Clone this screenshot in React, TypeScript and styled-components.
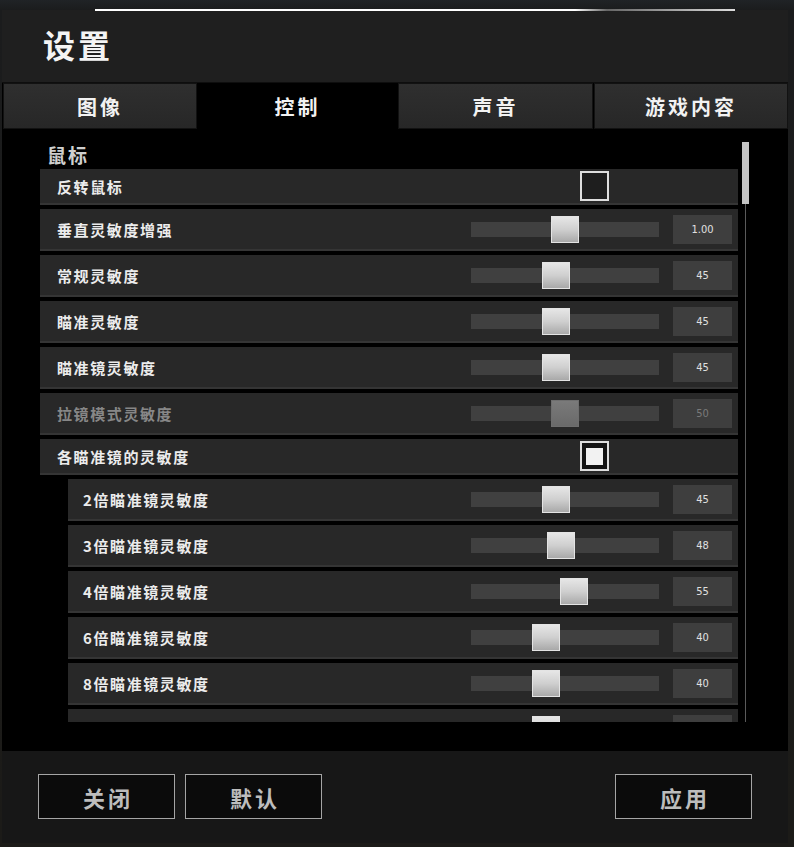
import styled, { createGlobalStyle } from "styled-components"

const GlobalStyle = createGlobalStyle`
  html, body {
    margin: 0;
    padding: 0;
    background: #1b1a18;
    font-family: "Noto Sans CJK SC", "Noto Sans", sans-serif;
  }
`

const Page = styled.div`
  width: 794px;
  height: 847px;
  padding: 10px 6px 0 2px;
  box-sizing: border-box;
  background: linear-gradient(180deg, #202326 0, #1b1c1d 10px, #1c1b18 100%);
`

const Panel = styled.div`
  position: relative;
  display: flex;
  flex-direction: column;
  height: 833px;
  background: #1f1f1f;

  &::before {
    content: "";
    position: absolute;
    top: -1px;
    left: 93px;
    width: 640px;
    height: 2px;
    background: linear-gradient(90deg, #fff 0, #fff 75%, #666 80%, #ddd 100%);
  }
`

const Header = styled.div`
  height: 72px;
  display: flex;
  align-items: center;
  padding-left: 41px;
  padding-bottom: 4px;
  box-sizing: border-box;
`

const Title = styled.h1`
  margin: 0;
  font-size: 32px;
  font-weight: 700;
  color: #f4f4f4;
  letter-spacing: 3px;
`

const TabBar = styled.div`
  display: grid;
  grid-template-columns: 194px 199px 195px 194px;
  column-gap: 1px;
  padding: 0 1px;
  height: 46px;
  background: #000;
  border-top: 1px solid #0e0e0e;
`

const Tab = styled.div<{ $active?: boolean }>`
  display: flex;
  align-items: center;
  justify-content: center;
  font-size: 20px;
  font-weight: 700;
  letter-spacing: 3px;
  color: #f2f2f2;
  background: ${(p) => (p.$active ? "#000" : "linear-gradient(180deg, #2f2f2f 0%, #272727 100%)")};
  border: ${(p) => (p.$active ? "none" : "1px solid #121212")};
`

const Content = styled.div`
  flex: 1;
  display: flex;
  gap: 4px;
  background: #000;
  padding: 13px 39px 29px 38px;
  min-height: 0;
`

const ScrollView = styled.div`
  flex: 1;
  height: 580px;
  overflow: hidden;
  display: flex;
  flex-direction: column;
  gap: 4px;
`

const SectionTitle = styled.div`
  height: 23px;
  line-height: 25px;
  padding-left: 7px;
  font-size: 19px;
  font-weight: 700;
  letter-spacing: 2px;
  color: #cfcfcf;
`

const Row = styled.div<{ $indent?: boolean; $tall?: boolean }>`
  flex: none;
  display: flex;
  align-items: center;
  height: ${(p) => (p.$tall ? "42px" : "36px")};
  margin-left: ${(p) => (p.$indent ? "28px" : "0")};
  padding: 0 6px 0 ${(p) => (p.$indent ? "15px" : "17px")};
  box-sizing: border-box;
  background: #282828;
  border-bottom: 2px solid #353535;
`

const Label = styled.div<{ $disabled?: boolean }>`
  flex: 1;
  font-size: 15px;
  font-weight: 700;
  letter-spacing: 1.6px;
  color: ${(p) => (p.$disabled ? "#878787" : "#ececec")};
`

const CheckBox = styled.div<{ $checked?: boolean }>`
  width: 29px;
  height: 30px;
  box-sizing: border-box;
  margin-right: 123px;
  border: 2px solid #dedede;
  background: ${(p) => (p.$checked ? "#141414" : "#1e1e1e")};
  display: flex;
  align-items: center;
  justify-content: center;

  &::after {
    content: "";
    display: ${(p) => (p.$checked ? "block" : "none")};
    width: 17px;
    height: 17px;
    background: #f2f2f2;
  }
`

const Track = styled.div`
  position: relative;
  width: 188px;
  height: 15px;
  background: #404040;
  margin-right: 14px;
`

const Thumb = styled.div<{ $disabled?: boolean }>`
  position: absolute;
  top: -6px;
  width: 28px;
  height: 27px;
  box-sizing: border-box;
  border: 1px solid ${(p) => (p.$disabled ? "#6e6e6e" : "#e4e4e4")};
  background: ${(p) =>
    p.$disabled
      ? "linear-gradient(180deg, #7a7a7a 0%, #6a6a6a 100%)"
      : "linear-gradient(180deg, #e6e6e6 0%, #cfcfcf 50%, #a9a9a9 100%)"};
`

const ValueBox = styled.div<{ $disabled?: boolean }>`
  width: 59px;
  height: 29px;
  display: flex;
  align-items: center;
  justify-content: center;
  background: #3e3e3e;
  font-family: "DejaVu Sans Condensed", "Liberation Sans", sans-serif;
  font-size: 11px;
  color: ${(p) => (p.$disabled ? "#7a7a7a" : "#e0e0e0")};
`

const ScrollBar = styled.div`
  width: 7px;
  height: 580px;
  display: flex;
  flex-direction: column;
  align-items: center;
`

const ScrollThumb = styled.div`
  width: 7px;
  height: 62px;
  background: #c4c4c4;
`

const ScrollTrack = styled.div`
  width: 1px;
  flex: 1;
  background: #5a5a5a;
`

const Footer = styled.div`
  height: 92px;
  box-sizing: border-box;
  display: flex;
  align-items: center;
  padding: 0 36px 1px 36px;
  gap: 10px;
  background: #171717;
`

const Button = styled.button<{ $push?: boolean }>`
  width: 137px;
  height: 45px;
  margin-left: ${(p) => (p.$push ? "auto" : "0")};
  background: #0b0b0b;
  border: 1px solid #a5a5a5;
  color: #bdbdbd;
  font-family: "Noto Sans CJK SC", sans-serif;
  font-size: 22px;
  font-weight: 700;
  letter-spacing: 3px;
  padding: 0 0 0 3px;
`

type Item =
  | { kind: "check"; label: string; checked?: boolean }
  | { kind: "slider"; label: string; value: string; pos: number; disabled?: boolean; indent?: boolean }

const items: Item[] = [
  { kind: "check", label: "反转鼠标" },
  { kind: "slider", label: "垂直灵敏度增强", value: "1.00", pos: 80 },
  { kind: "slider", label: "常规灵敏度", value: "45", pos: 71 },
  { kind: "slider", label: "瞄准灵敏度", value: "45", pos: 71 },
  { kind: "slider", label: "瞄准镜灵敏度", value: "45", pos: 71 },
  { kind: "slider", label: "拉镜模式灵敏度", value: "50", pos: 80, disabled: true },
  { kind: "check", label: "各瞄准镜的灵敏度", checked: true },
  { kind: "slider", label: "2倍瞄准镜灵敏度", value: "45", pos: 71, indent: true },
  { kind: "slider", label: "3倍瞄准镜灵敏度", value: "48", pos: 76, indent: true },
  { kind: "slider", label: "4倍瞄准镜灵敏度", value: "55", pos: 89, indent: true },
  { kind: "slider", label: "6倍瞄准镜灵敏度", value: "40", pos: 61, indent: true },
  { kind: "slider", label: "8倍瞄准镜灵敏度", value: "40", pos: 61, indent: true },
  { kind: "slider", label: "15倍瞄准镜灵敏度", value: "40", pos: 61, indent: true },
]

export default function App() {
  return (
    <>
      <GlobalStyle />
      <Page>
        <Panel>
          <Header>
            <Title>设置</Title>
          </Header>
          <TabBar>
            <Tab>图像</Tab>
            <Tab $active>控制</Tab>
            <Tab>声音</Tab>
            <Tab>游戏内容</Tab>
          </TabBar>
          <Content>
            <ScrollView>
              <SectionTitle>鼠标</SectionTitle>
              {items.map((item, i) =>
                item.kind === "check" ? (
                  <Row key={i}>
                    <Label>{item.label}</Label>
                    <CheckBox $checked={item.checked} />
                  </Row>
                ) : (
                  <Row key={i} $tall $indent={item.indent}>
                    <Label $disabled={item.disabled}>{item.label}</Label>
                    <Track>
                      <Thumb $disabled={item.disabled} style={{ left: item.pos }} />
                    </Track>
                    <ValueBox $disabled={item.disabled}>{item.value}</ValueBox>
                  </Row>
                )
              )}
            </ScrollView>
            <ScrollBar>
              <ScrollThumb />
              <ScrollTrack />
            </ScrollBar>
          </Content>
          <Footer>
            <Button>关闭</Button>
            <Button>默认</Button>
            <Button $push>应用</Button>
          </Footer>
        </Panel>
      </Page>
    </>
  )
}
